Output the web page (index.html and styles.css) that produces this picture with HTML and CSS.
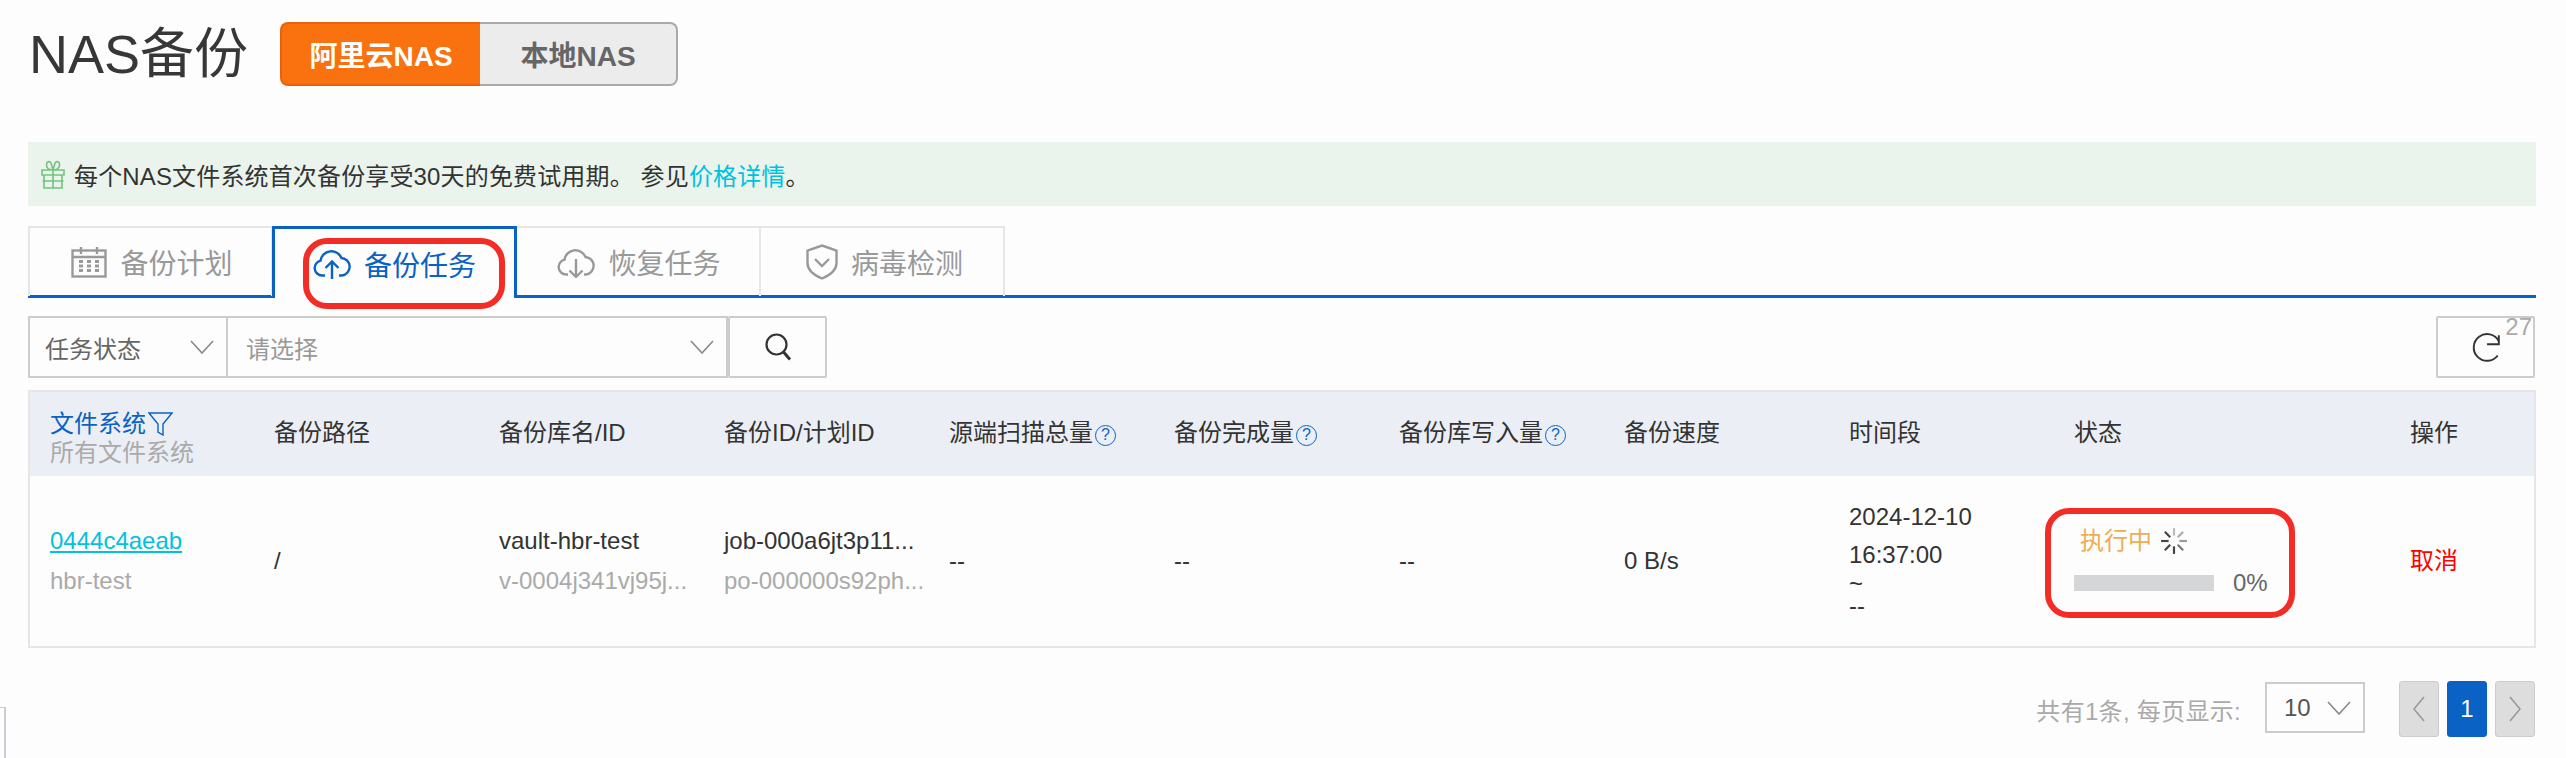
FILE: index.html
```html
<!DOCTYPE html>
<html lang="zh-CN">
<head>
<meta charset="utf-8">
<title>NAS备份</title>
<link rel="stylesheet" href="styles.css">
</head>
<body>
<div class="page">
  <header class="header">
    <h1 class="title">NAS备份</h1>
    <div class="toggle">
      <span class="toggle-on">阿里云NAS</span>
      <span class="toggle-off">本地NAS</span>
    </div>
  </header>

  <div class="banner">
    <svg class="gift" viewBox="0 0 26 30" fill="none" stroke="#74c27d" stroke-width="1.6"><path d="M2 11h22v5H2zM4 16v13h18V16M13 11v18M2.500 22h21M13 11C9 11 6 9 6.500 5 7 2 10 2 11 4l2 7 2-7c1-2 4-2 4.500 1C20 9 17 11 13 11z"/></svg>
    <p class="banner-text">每个NAS文件系统首次备份享受30天的免费试用期。 参见<a class="banner-link">价格详情</a>。</p>
  </div>

  <nav class="tabs">
    <div class="tab tab-first">
      <svg class="icon-cal" viewBox="0 0 36 32" fill="none" stroke="#999" stroke-width="2.400"><rect x="1.500" y="4.500" width="33" height="26"/><path d="M1.500 11h33M10 1v7M26 1v7"/><path d="M8 15.500h4M16 15.500h4M24 15.500h4M8 20h4M16 20h4M24 20h4M8 24.500h4M16 24.500h4M24 24.500h4" stroke-width="3"/></svg>
      <span>备份计划</span>
    </div>
    <div class="tab tab-active">
      <svg class="icon-cloud" viewBox="0 0 38 31" fill="none" stroke="#0a62c4" stroke-width="2.400"><path d="M12 27.500H9a7.500 7.500 0 0 1-1.500-14.800A11 11 0 0 1 28.500 10a8.800 8.800 0 0 1 .5 17.500h-3"/><path d="M19 31V13.500M12.500 20l6.500-6.500 6.500 6.500"/></svg>
      <span>备份任务</span>
      <i class="mark mark-tab"></i>
    </div>
    <div class="tab tab-third">
      <svg class="icon-cloud" viewBox="0 0 38 31" fill="none" stroke="#999" stroke-width="2.400"><path d="M11 27.500H9a7.500 7.500 0 0 1-1.500-14.800A11 11 0 0 1 28.500 10a8.800 8.800 0 0 1 .5 17.500h-2"/><path d="M19 12v18M12.500 23.500L19 30l6.500-6.500"/></svg>
      <span>恢复任务</span>
    </div>
    <div class="tab tab-last">
      <svg class="icon-shield" viewBox="0 0 32 36" fill="none" stroke="#999" stroke-width="2.400"><path d="M16 1.500L30.500 6.500V19c0 7-6 12-14.500 15.500C7.500 31 1.500 26 1.500 19V6.500z"/><path d="M9 15l7 7 7-7"/></svg>
      <span>病毒检测</span>
    </div>
  </nav>

  <div class="filters">
    <div class="select select-type"><span>任务状态</span><svg class="chev" viewBox="0 0 24 14" fill="none" stroke="#888" stroke-width="1.600"><path d="M1 1l11 12L23 1"/></svg></div>
    <div class="select select-value"><span class="placeholder">请选择</span><svg class="chev" viewBox="0 0 24 14" fill="none" stroke="#888" stroke-width="1.600"><path d="M1 1l11 12L23 1"/></svg></div>
    <button class="btn-search"><svg viewBox="0 0 28 30" width="28" height="30" fill="none" stroke="#333" stroke-width="2.200"><circle cx="12.500" cy="12.500" r="10"/><path d="M19.500 20l6.500 7.500" stroke-width="3"/></svg></button>
    <button class="btn-refresh">
      <svg class="refresh" viewBox="0 0 28 30" fill="none" stroke="#333" stroke-width="1.800"><path d="M26 8.500A12.500 12.500 0 1 0 25 22"/><path d="M15 11.500h11V3"/></svg>
      <span class="count">27</span>
    </button>
  </div>

  <table class="grid">
    <thead>
      <tr>
        <th class="c-wide c-fs">
          <div class="fs-title">文件系统<svg class="funnel" viewBox="0 0 25 24" fill="none" stroke="#0a62c4" stroke-width="1.400"><path d="M1 1h23L15 12v11l-5-3V12z"/></svg></div>
          <div class="muted fs-sub">所有文件系统</div>
        </th>
        <th class="c-wide">备份路径</th>
        <th class="c-wide">备份库名/ID</th>
        <th class="c-wide">备份ID/计划ID</th>
        <th class="c-wide">源端扫描总量<span class="qm">?</span></th>
        <th class="c-wide">备份完成量<span class="qm">?</span></th>
        <th class="c-wide">备份库写入量<span class="qm">?</span></th>
        <th class="c-wide">备份速度</th>
        <th class="c-wide">时间段</th>
        <th class="c-status">状态</th>
        <th>操作</th>
      </tr>
    </thead>
    <tbody>
      <tr>
        <td><a class="link">0444c4aeab</a><div class="muted">hbr-test</div></td>
        <td>/</td>
        <td>vault-hbr-test<div class="muted">v-0004j341vj95j...</div></td>
        <td>job-000a6jt3p11...<div class="muted">po-000000s92ph...</div></td>
        <td>--</td>
        <td>--</td>
        <td>--</td>
        <td>0 B/s</td>
        <td>
          <div class="time">
            <div>2024-12-10</div>
            <div class="time-second">16:37:00</div>
            <div class="time-small">~</div>
            <div class="time-small">--</div>
          </div>
        </td>
        <td>
          <div class="status">
            <div class="status-top">
              <span class="running">执行中</span>
              <svg class="spin" viewBox="0 0 26 26" fill="none" stroke="#444" stroke-width="2"><path d="M13 1v7" stroke="#bbb"/><path d="M21.500 4.500l-5 5" stroke="#aaa"/><path d="M25 13h-7" stroke="#999"/><path d="M21.500 21.500l-5-5" stroke="#777"/><path d="M13 25v-7"/><path d="M4.500 21.500l5-5"/><path d="M1 13h7"/><path d="M4.500 4.500l5 5"/></svg>
            </div>
            <div class="status-bottom">
              <span class="bar"></span>
              <span class="pct">0%</span>
            </div>
            <i class="mark mark-status"></i>
          </div>
        </td>
        <td><a class="cancel">取消</a></td>
      </tr>
    </tbody>
  </table>

  <div class="pager">
    <span class="pager-text">共有1条, 每页显示:</span>
    <div class="page-size"><span>10</span><svg class="chev" viewBox="0 0 24 14" fill="none" stroke="#888" stroke-width="1.600"><path d="M1 1l11 12L23 1"/></svg></div>
    <div class="pages">
      <button class="pg pg-off"><svg viewBox="0 0 12 26" width="12" height="26" fill="none" stroke="#999" stroke-width="1.600"><path d="M11 1L1 13l10 12"/></svg></button>
      <button class="pg pg-current">1</button>
      <button class="pg pg-off"><svg viewBox="0 0 12 26" width="12" height="26" fill="none" stroke="#999" stroke-width="1.600"><path d="M1 1l10 12L1 25"/></svg></button>
    </div>
  </div>
</div>
<div class="corner"></div>
</body>
</html>
```
FILE: styles.css
```css
* { box-sizing: border-box; }
html, body { margin: 0; height: 100%; overflow: hidden; background: #fdfdfd; }
body {
  font-family: "Liberation Sans", "Noto Sans CJK SC", sans-serif;
  font-size: 24px;
  color: #333;
}
.page { display: flex; flex-direction: column; padding: 22px 30px 0 28px; }

.header { display: flex; align-items: center; height: 64px; }
.title { margin: 0 0 0 1px; width: 251px; font-size: 54px; font-weight: 400; line-height: 64px; color: #373737; }
.toggle { display: flex; height: 64px; font-size: 28px; font-weight: 700; }
.toggle-on, .toggle-off { display: flex; align-items: center; justify-content: center; }
.toggle-on { width: 200px; color: #fff; background: #f9720f; border: 2px solid #e96207; border-right: 0; border-radius: 8px 0 0 8px; }
.toggle-off { width: 198px; color: #666; background: #ececec; border: 2px solid #aaa; border-left: 0; border-radius: 0 8px 8px 0; }

.banner { display: flex; align-items: center; height: 64px; margin-top: 56px; padding-left: 12px; background: #ebf4ec; }
.gift { width: 26px; height: 30px; margin-right: 8px; }
.banner-text { margin: 0; color: #333; letter-spacing: .15px; }
.banner-link { color: #00c1de; }

.tabs { display: flex; height: 72px; margin-top: 20px; border-bottom: 3px solid #0a62c4; }
.tab { display: flex; align-items: center; justify-content: center; gap: 13px; position: relative; width: 245px; height: 70px; font-size: 28px; color: #999; border: 2px solid #e6e6e6; border-left: 0; border-bottom: 0; }
.tab-first { border-left: 2px solid #e6e6e6; padding-left: 3px; }
.tab-third { width: 244px; padding-left: 2px; }
.tab-last { width: 244px; padding-left: 5px; }
.tab-active { height: 72px; color: #0a62c4; background: #fdfdfd; border: 3px solid #0a62c4; border-bottom: 0; margin-left: -1px; }
.icon-cal { width: 36px; height: 32px; }
.icon-cloud { width: 38px; height: 31px; }
.icon-shield { width: 32px; height: 36px; }

.mark { position: absolute; display: block; border: 6px solid #f32d26; pointer-events: none; }
.mark-tab { left: 28px; top: 9px; width: 202px; height: 71px; border-radius: 24px; }
.mark-status { left: -29px; top: -12px; width: 250px; height: 110px; border-radius: 24px; }

.filters { display: flex; height: 62px; margin-top: 18px; }
.select { display: flex; align-items: center; justify-content: space-between; border: 2px solid #ccc; background: #fdfdfd; color: #666; }
.select-type { width: 200px; padding: 0 12px 0 15px; }
.select-value { width: 500px; padding: 0 12px 0 18px; border-left: 0; }
.placeholder { color: #999; }
.chev { width: 24px; height: 14px; }
.btn-search, .btn-refresh { display: flex; align-items: center; justify-content: center; padding: 0; background: #fdfdfd; border: 2px solid #ccc; border-radius: 2px; }
.btn-search { width: 99px; }
.btn-refresh { position: relative; width: 99px; margin-left: auto; margin-right: 1px; }
.refresh { width: 30px; height: 32px; margin-top: 2px; }
.count { position: absolute; right: 1px; top: -5px; font-size: 24px; color: #aaa; }

.grid { width: 2508px; margin-top: 12px; border-collapse: collapse; table-layout: fixed; border: 2px solid #e6e6e6; }
.grid th { height: 85px; padding: 0 0 7px 20px; background: #ebeff5; font-weight: 400; text-align: left; vertical-align: middle; color: #333; }
.grid .c-fs { padding: 13px 0 0 20px; }
.grid td { height: 171px; padding: 0 0 0 20px; line-height: 40px; vertical-align: middle; white-space: nowrap; }
.c-wide { width: 225px; }
.c-status { width: 336px; }
.fs-title { display: flex; align-items: center; line-height: 26px; color: #0a62c4; margin-top: -3px; }
.funnel { width: 25px; height: 24px; margin-left: 2px; }
.fs-sub { line-height: 28px; margin-top: 2px; }
.muted { color: #aaa; }
.qm { display: inline-flex; align-items: center; justify-content: center; width: 21px; height: 21px; margin-left: 2px; font-size: 16px; line-height: 1; color: #0a62c4; border: 1.500px solid #0a62c4; border-radius: 50%; vertical-align: 1px; }
.link { color: #00c1de; text-decoration: underline; }
.time { margin-bottom: 8px; }
.time-second { line-height: 36px; }
.time-small { line-height: 22px; }
.status { position: relative; }
.status-top { display: flex; align-items: center; gap: 8px; height: 43px; padding-left: 6px; }
.running { color: #efac56; }
.spin { width: 28px; height: 28px; }
.status-bottom { display: flex; align-items: center; gap: 19px; height: 40px; }
.bar { width: 140px; height: 16px; background: #d5d6d8; }
.pct { color: #666; }
.cancel { color: #f00; }

.pager { display: flex; align-items: center; justify-content: flex-end; height: 56px; margin-top: 33px; margin-right: 1px; }
.pager-text { color: #aaa; margin-right: 24px; letter-spacing: .3px; }
.page-size { display: flex; align-items: center; justify-content: space-between; width: 100px; height: 51px; margin-bottom: 3px; padding: 0 12px 0 17px; border: 2px solid #ccc; color: #555; }
.pages { display: flex; gap: 8px; margin-left: 34px; }
.pg { display: flex; align-items: center; justify-content: center; width: 40px; height: 56px; padding: 0; font-family: inherit; font-size: 24px; border: 1px solid #ccc; border-radius: 3px; }
.pg-off { background: #ddd; }
.pg-current { background: #0a62c4; border-color: #0a62c4; color: #fff; font-weight: 400; }

.corner { position: absolute; left: 0; top: 707px; width: 6px; height: 51px; border-top: 1px solid #c9ced6; border-right: 2px solid #c9ced6; }
```
